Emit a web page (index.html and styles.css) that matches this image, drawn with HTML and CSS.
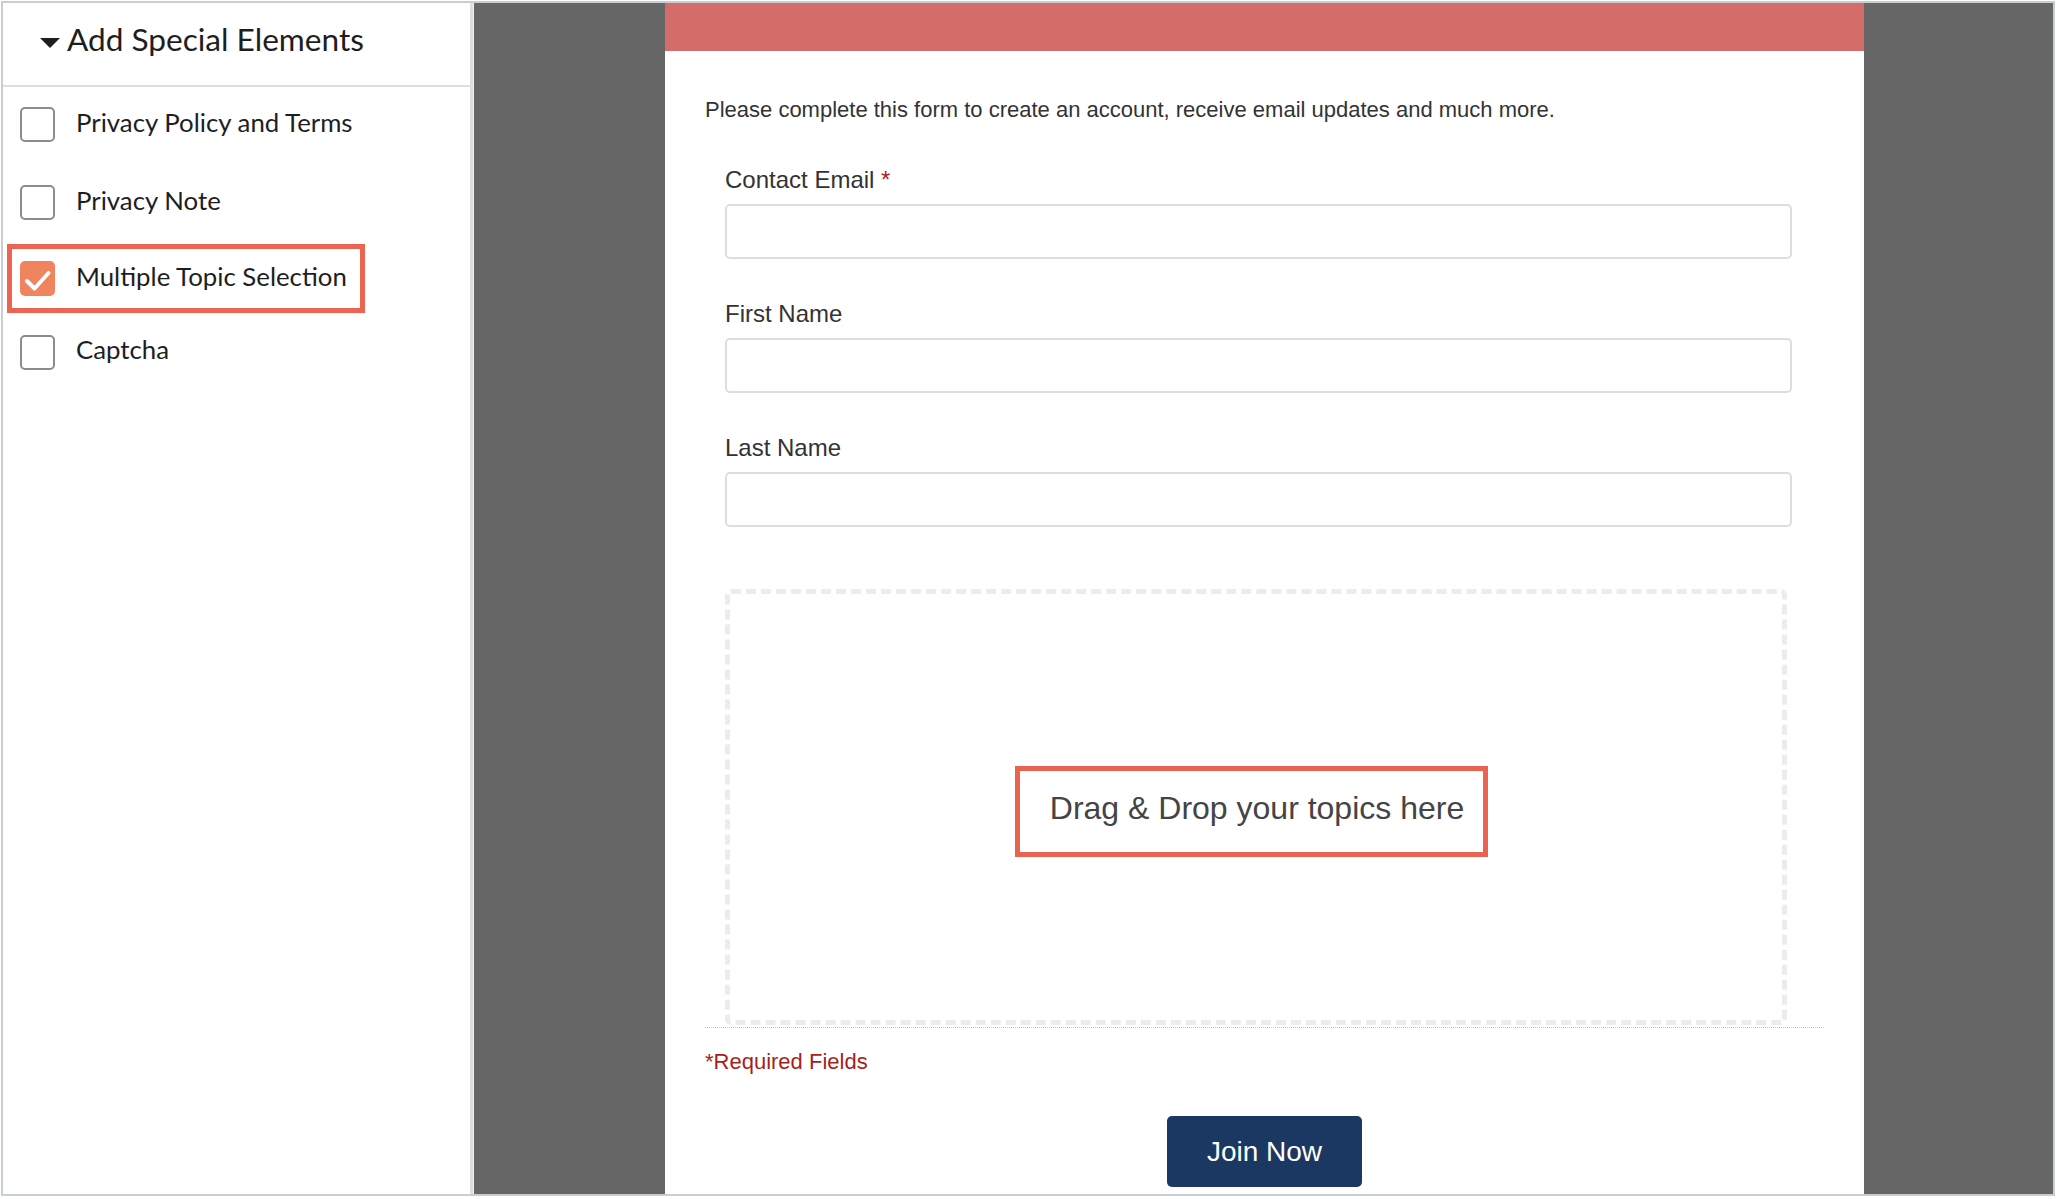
FILE: index.html
```html
<!DOCTYPE html>
<html lang="en">
<head>
<meta charset="utf-8">
<title>Add Special Elements</title>
<link rel="stylesheet" href="styles.css">
</head>
<body>
<div class="frame">
  <aside class="panel">
    <div class="panel-head">
      <span class="caret"></span>
      <span class="panel-title">Add Special Elements</span>
    </div>
    <ul class="opts">
      <li class="opt"><span class="box"></span><span class="opt-label">Privacy Policy and Terms</span></li>
      <li class="opt"><span class="box"></span><span class="opt-label">Privacy Note</span></li>
      <li class="opt opt-hl">
        <span class="box box-on">
          <svg class="tick" viewBox="0 0 35 35" width="35" height="35"><polyline points="7,20 14.5,27.5 28.5,12" fill="none" stroke="#fff" stroke-width="4" stroke-linecap="round" stroke-linejoin="round"/></svg>
        </span>
        <span class="opt-label">Multiple Topic Selection</span>
      </li>
      <li class="opt"><span class="box"></span><span class="opt-label">Captcha</span></li>
    </ul>
  </aside>
  <main class="stage">
    <section class="form">
      <div class="form-bar"></div>
      <div class="form-body">
        <p class="intro">Please complete this form to create an account, receive email updates and much more.</p>
        <div class="fields">
          <div class="field">
            <label class="field-label">Contact Email <span class="req">*</span></label>
            <div class="input"></div>
          </div>
          <div class="field">
            <label class="field-label">First Name</label>
            <div class="input"></div>
          </div>
          <div class="field">
            <label class="field-label">Last Name</label>
            <div class="input"></div>
          </div>
        </div>
        <div class="drop-wrap">
          <div class="drop">
            <div class="drop-label">Drag &amp; Drop your topics here</div>
          </div>
        </div>
        <p class="required">*Required Fields</p>
        <div class="actions"><button class="join" type="button">Join Now</button></div>
      </div>
    </section>
  </main>
</div>
</body>
</html>
```
FILE: styles.css
```css
*, *::before, *::after { box-sizing: border-box; }
html, body { margin: 0; padding: 0; background: #fff; }
body { width: 2057px; height: 1199px; overflow: hidden; }

.frame {
  margin: 1px 0 0 1px;
  width: 2054px;
  height: 1195px;
  border: 2px solid #c9ced3;
  display: flex;
  overflow: hidden;
}

/* left panel */
.panel {
  width: 470px;
  flex: none;
  border-right: 3px solid #dedede;
  background: #fff;
  font-family: Lato, "Liberation Sans", sans-serif;
  color: #1e1e1e;
}
.panel-head {
  height: 84px;
  border-bottom: 2px solid #dedede;
  padding: 17px 0 0 37px;
  display: flex;
  align-items: flex-start;
}
.caret {
  width: 0; height: 0;
  margin-top: 18px;
  margin-right: 7px;
  border-left: 10px solid transparent;
  border-right: 10px solid transparent;
  border-top: 10px solid #1e1e1e;
}
.panel-title { font-size: 31.6px; line-height: 38px; }

.opts {
  list-style: none;
  margin: 0;
  padding: 20px 0 0 17px;
  display: flex;
  flex-direction: column;
}
.opt {
  display: flex;
  align-items: center;
  height: 35px;
  position: relative;
}
.opt:nth-child(2) { margin-top: 43px; }
.opt:nth-child(3) { margin-top: 41px; }
.opt:nth-child(4) { margin-top: 39px; }
.box {
  width: 35px; height: 35px;
  flex: none;
  border: 2px solid #8c8c8c;
  border-radius: 5px;
  margin-right: 21px;
}
.box-on { background: #f0845f; border-color: #f0845f; position: relative; }
.tick { position: absolute; left: -2px; top: -2px; }
.opt-label { font-size: 25.8px; line-height: 30px; padding-bottom: 5px; }
.opt:nth-child(4) .opt-label { padding-bottom: 8px; }
.opt-hl::after {
  content: "";
  position: absolute;
  left: -13px; top: -17px;
  width: 358px; height: 69px;
  border: 5px solid #ec6452;
}

/* stage */
.stage {
  flex: 1;
  background: #666;
  border-left: 1px solid #f2f2f2;
  padding-left: 191px;
  display: flex;
}
.form {
  width: 1199px;
  background: #fff;
  font-family: "Liberation Sans", Arial, sans-serif;
  color: #333;
}
.form-bar { height: 48px; background: #d46c69; }
.form-body { padding: 0 40px; }
.intro {
  margin: 46px 0 0;
  font-size: 22px;
  line-height: 26px;
  color: #333;
}
.fields { margin: 43px 0 0 20px; width: 1067px; }
.field { margin-bottom: 41px; }
.field:last-child { margin-bottom: 0; }
.field-label {
  display: block;
  font-size: 24px;
  line-height: 28px;
  margin-bottom: 10px;
  color: #333;
}
.req { color: #b0211c; }
.input {
  height: 55px;
  border: 2px solid #dddddd;
  border-radius: 5px;
  background: #fff;
}

.drop-wrap {
  margin-top: 62px;
  border-bottom: 1px dotted #c4c4c4;
  padding: 0 0 2px 20px;
}
.drop {
  width: 1062px;
  height: 436px;
  border: 5px dashed #ececec;
  border-radius: 6px;
  display: flex;
  align-items: center;
  justify-content: center;
}
.drop-label {
  margin: 9px 0 0 -9px;
  border: 5px solid #ea6351;
  padding: 19px 19px 25px 30px;
  font-size: 32px;
  line-height: 37px;
  color: #444;
  white-space: nowrap;
}

.required {
  margin: 21px 0 0;
  font-size: 22px;
  line-height: 26px;
  color: #a61f1c;
}
.actions {
  margin-top: 41px;
  display: flex;
  justify-content: center;
}
.join {
  width: 195px;
  height: 71px;
  border: none;
  border-radius: 5px;
  background: #1a3861;
  color: #fff;
  font-family: "Liberation Sans", Arial, sans-serif;
  font-size: 28px;
  padding: 0;
}
```
